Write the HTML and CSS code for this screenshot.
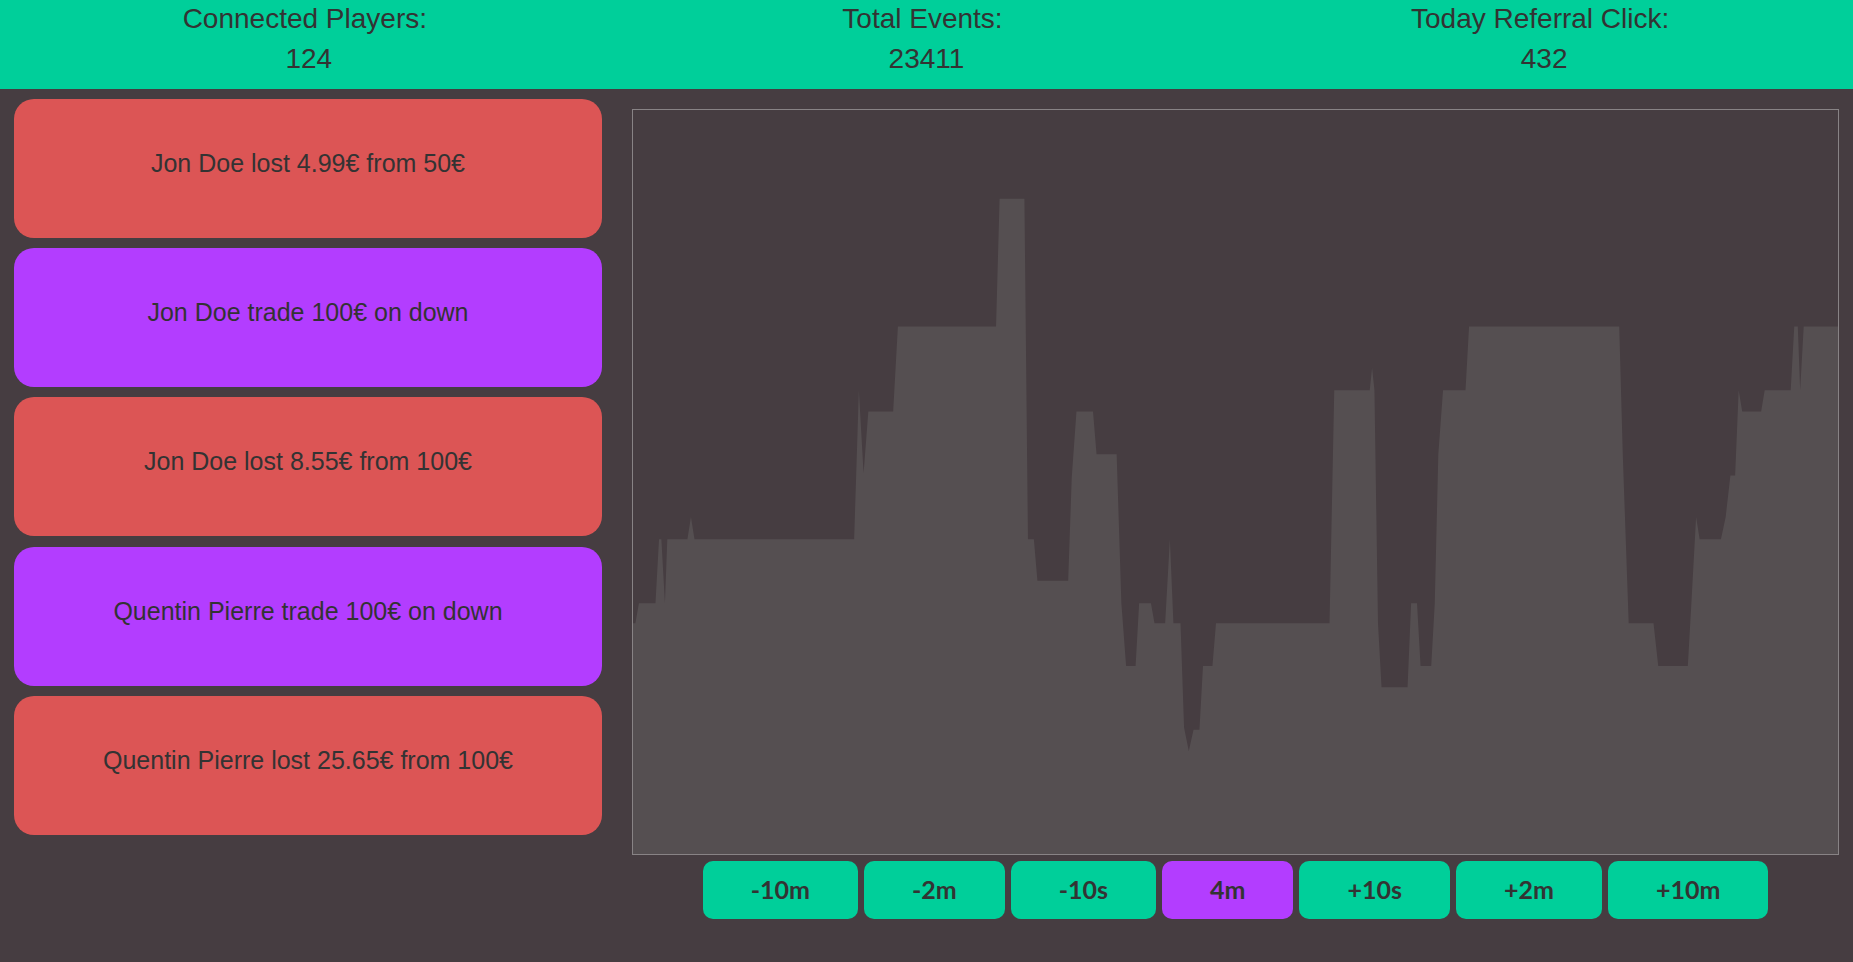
FILE: index.html
```html
<!DOCTYPE html>
<html>
<head>
<meta charset="utf-8">
<title>Dashboard</title>
<link rel="stylesheet" href="styles.css">
</head>
<body>
<header class="stats">
  <div class="stat"><div class="stat-label">Connected Players:</div><div class="stat-value">124</div></div>
  <div class="stat"><div class="stat-label">Total Events:</div><div class="stat-value">23411</div></div>
  <div class="stat"><div class="stat-label">Today Referral Click:</div><div class="stat-value">432</div></div>
</header>
<main class="main">
  <section class="events">
    <div class="event lost">Jon Doe lost 4.99€ from 50€</div>
    <div class="event trade">Jon Doe trade 100€ on down</div>
    <div class="event lost">Jon Doe lost 8.55€ from 100€</div>
    <div class="event trade">Quentin Pierre trade 100€ on down</div>
    <div class="event lost">Quentin Pierre lost 25.65€ from 100€</div>
  </section>
  <section class="chart-area">
    <div class="chart">
      <svg class="chart-svg" viewBox="536 93 1019 629" preserveAspectRatio="none">
        <path fill="#554f51" d="M536,722 L536,527 L538,527 L541,510 L555,510 L558,456 L560,456 L563,510 L565,456 L582,456 L585,437 L588,456 L723,456 L727,330 L731,400 L735,348 L756,348 L760,276 L843,276 L846,168 L867,168 L870,456 L875,456 L878,491 L904,491 L907,404 L911,348 L925,348 L928,384 L945,384 L949,510 L953,563 L961,563 L964,510 L974,510 L977,527 L986,527 L990,456 L993,527 L999,527 L1002,615 L1006,635 L1010,617 L1015,617 L1018,563 L1026,563 L1029,527 L1125,527 L1129,330 L1159,330 L1161,311 L1163,330 L1166,527 L1169,581 L1191,581 L1194,510 L1199,510 L1202,563 L1211,563 L1214,510 L1217,384 L1221,330 L1240,330 L1243,276 L1370,276 L1373,384 L1378,527 L1399,527 L1403,563 L1428,563 L1431,510 L1435,437 L1438,456 L1456,456 L1460,437 L1464,402 L1468,402 L1471,330 L1474,348 L1490,348 L1493,330 L1515,330 L1518,276 L1521,276 L1523,330 L1526,276 L1555,276 L1555,722 Z"/>
      </svg>
    </div>
    <div class="ranges">
      <button class="range">-10m</button>
      <button class="range">-2m</button>
      <button class="range">-10s</button>
      <button class="range active">4m</button>
      <button class="range">+10s</button>
      <button class="range">+2m</button>
      <button class="range">+10m</button>
    </div>
  </section>
</main>
</body>
</html>
```
FILE: styles.css
```css
html, body {
  margin: 0;
  padding: 0;
}
body {
  background: #463d41;
  font-family: "Liberation Sans", Arial, sans-serif;
  color: #333333;
  height: 962px;
  overflow: hidden;
}
.stats {
  background: #00cf9a;
  height: 89px;
  display: grid;
  grid-template-columns: 1fr 1fr 1fr;
  box-sizing: border-box;
  padding-top: 3px;
}
.stat {
  display: flex;
  flex-direction: column;
  align-items: center;
  gap: 8px;
  font-size: 28px;
  line-height: 32px;
}
.stat-label {
  padding-right: 8px;
}
.main {
  display: flex;
}
.events {
  width: 618px;
  box-sizing: border-box;
  padding: 10px 16px 0 14px;
  display: flex;
  flex-direction: column;
  gap: 10.2px;
}
.event {
  height: 139px;
  box-sizing: border-box;
  border-radius: 20px;
  font-size: 25px;
  line-height: 30px;
  text-align: center;
  padding-top: 49px;
}
.lost {
  background: #dc5555;
}
.trade {
  background: #b33dff;
}
.chart-area {
  flex: 1;
  padding: 20px 14px 0 14px;
  display: flex;
  flex-direction: column;
  align-items: center;
}
.chart {
  align-self: stretch;
  height: 746px;
  box-sizing: border-box;
  border: 1px solid #888385;
}
.chart-svg {
  display: block;
  width: 100%;
  height: 100%;
}
.ranges {
  display: flex;
  gap: 6px;
  margin-top: 6px;
}
.range {
  font-family: Lato, "Liberation Sans", sans-serif;
  font-weight: 700;
  font-size: 25px;
  color: #333333;
  background: #00cf9a;
  border: none;
  border-radius: 10px;
  height: 58px;
  padding: 0 48px 3px;
}
.range.active {
  background: #b33dff;
}
```
